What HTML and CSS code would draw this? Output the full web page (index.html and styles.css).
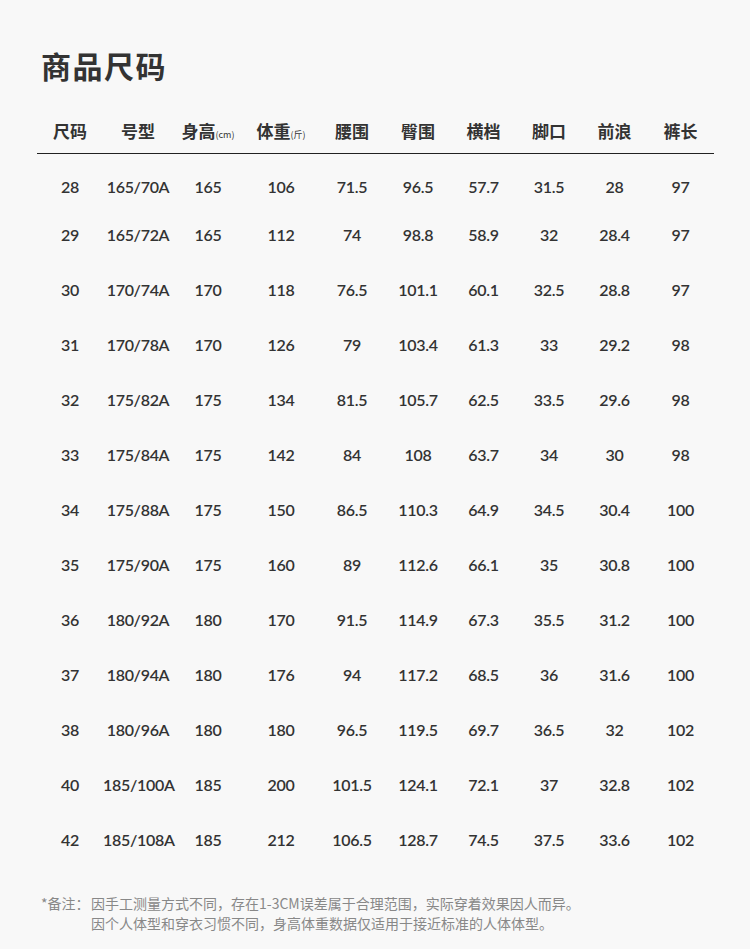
FILE: index.html
```html
<!DOCTYPE html>
<html lang="zh-CN">
<head>
<meta charset="utf-8">
<title>商品尺码</title>
<link rel="stylesheet" href="styles.css">
</head>
<body>
<main class="page">
  <h1 class="title">商品尺码</h1>
  <div class="table">
    <div class="row head">
      <div>尺码</div><div>号型</div><div>身高<small>(cm)</small></div><div>体重<small>(斤)</small></div><div>腰围</div><div>臀围</div><div>横档</div><div>脚口</div><div>前浪</div><div>裤长</div>
    </div>
    <div class="body">
      <div class="row first"><div>28</div><div>165/70A</div><div>165</div><div>106</div><div>71.5</div><div>96.5</div><div>57.7</div><div>31.5</div><div>28</div><div>97</div></div>
      <div class="row"><div>29</div><div>165/72A</div><div>165</div><div>112</div><div>74</div><div>98.8</div><div>58.9</div><div>32</div><div>28.4</div><div>97</div></div>
      <div class="row"><div>30</div><div>170/74A</div><div>170</div><div>118</div><div>76.5</div><div>101.1</div><div>60.1</div><div>32.5</div><div>28.8</div><div>97</div></div>
      <div class="row"><div>31</div><div>170/78A</div><div>170</div><div>126</div><div>79</div><div>103.4</div><div>61.3</div><div>33</div><div>29.2</div><div>98</div></div>
      <div class="row"><div>32</div><div>175/82A</div><div>175</div><div>134</div><div>81.5</div><div>105.7</div><div>62.5</div><div>33.5</div><div>29.6</div><div>98</div></div>
      <div class="row"><div>33</div><div>175/84A</div><div>175</div><div>142</div><div>84</div><div>108</div><div>63.7</div><div>34</div><div>30</div><div>98</div></div>
      <div class="row"><div>34</div><div>175/88A</div><div>175</div><div>150</div><div>86.5</div><div>110.3</div><div>64.9</div><div>34.5</div><div>30.4</div><div>100</div></div>
      <div class="row"><div>35</div><div>175/90A</div><div>175</div><div>160</div><div>89</div><div>112.6</div><div>66.1</div><div>35</div><div>30.8</div><div>100</div></div>
      <div class="row"><div>36</div><div>180/92A</div><div>180</div><div>170</div><div>91.5</div><div>114.9</div><div>67.3</div><div>35.5</div><div>31.2</div><div>100</div></div>
      <div class="row"><div>37</div><div>180/94A</div><div>180</div><div>176</div><div>94</div><div>117.2</div><div>68.5</div><div>36</div><div>31.6</div><div>100</div></div>
      <div class="row"><div>38</div><div>180/96A</div><div>180</div><div>180</div><div>96.5</div><div>119.5</div><div>69.7</div><div>36.5</div><div>32</div><div>102</div></div>
      <div class="row"><div>40</div><div>185/100A</div><div>185</div><div>200</div><div>101.5</div><div>124.1</div><div>72.1</div><div>37</div><div>32.8</div><div>102</div></div>
      <div class="row"><div>42</div><div>185/108A</div><div>185</div><div>212</div><div>106.5</div><div>128.7</div><div>74.5</div><div>37.5</div><div>33.6</div><div>102</div></div>
    </div>
  </div>
  <div class="note">
    <span class="note-label">*备注：</span>
    <p class="note-text">因手工测量方式不同，存在1-3CM误差属于合理范围，实际穿着效果因人而异。<br>因个人体型和穿衣习惯不同，身高体重数据仅适用于接近标准的人体体型。</p>
  </div>
</main>
</body>
</html>
```
FILE: styles.css
```css
html, body {
  margin: 0;
  padding: 0;
  background: #f8f8f8;
}
body {
  font-family: "Lato", "Noto Sans CJK SC", sans-serif;
  color: #333;
}
.page {
  width: 750px;
  height: 949px;
  box-sizing: border-box;
  padding: 46px 36px 0 37px;
}
.title {
  margin: 0 0 0 4px;
  font-family: "Noto Sans CJK SC", sans-serif;
  font-size: 30px;
  font-weight: 700;
  letter-spacing: 1.5px;
  line-height: 38px;
  color: #333;
}
.table {
  margin-top: 29px;
  width: 677px;
}
.row {
  display: grid;
  grid-template-columns: 66px 70px 70px 76px 66px 66px 65px 66px 65px 67px;
  height: 55px;
  align-items: center;
  text-align: center;
  font-size: 16px;
  font-weight: 600;
  letter-spacing: -0.3px;
  white-space: nowrap;
}
.row.head {
  height: 35px;
  padding-top: 5px;
  align-items: start;
  font-family: "Noto Sans CJK SC", sans-serif;
  font-size: 17px;
  letter-spacing: 0;
  font-weight: 700;
  line-height: 26px;
  border-bottom: 1px solid #222;
}
.row.head small {
  font-size: 9px;
  font-weight: 400;
}
.body {
  padding-top: 12px;
}
.row.first {
  height: 41px;
}
.note {
  display: flex;
  margin-top: 26px;
  margin-left: 4px;
  font-family: "Noto Sans CJK SC", sans-serif;
  font-size: 14px;
  line-height: 20px;
  color: #888;
}
.note-label {
  width: 50px;
  flex: none;
}
.note-text {
  margin: 0;
}
```
